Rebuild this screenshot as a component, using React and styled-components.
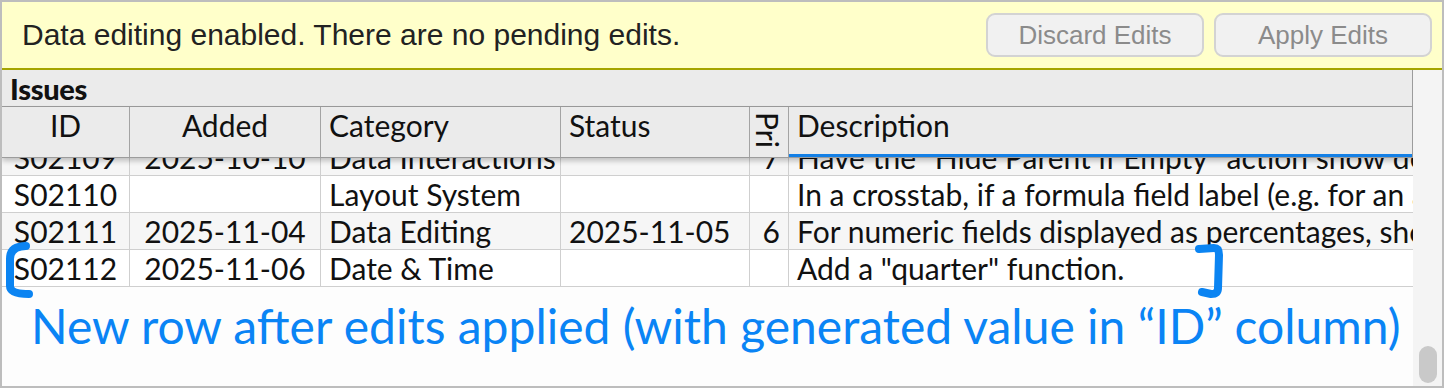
import React from 'react';
import styled, { createGlobalStyle } from 'styled-components';

const Global = createGlobalStyle`
  html, body { margin: 0; padding: 0; background: #ffffff; }
  body { width: 1444px; height: 388px; overflow: hidden; }
`;

const COLS = '128px 191px 240px 189px 39px 1fr';

const Frame = styled.div`
  position: relative;
  width: 1444px;
  height: 388px;
  box-sizing: border-box;
  border: 2px solid #bdbdbd;
  display: flex;
  flex-direction: column;
  background: #fdfdfd;
  overflow: hidden;
`;

const Banner = styled.div`
  flex: none;
  height: 66px;
  background: #ffffca;
  border-bottom: 2px solid #a4a400;
  display: flex;
  align-items: center;
  justify-content: space-between;
  padding: 0 10px 0 20px;
  font-family: "Liberation Sans", Arial, sans-serif;
`;

const BannerText = styled.span`
  font-size: 30px;
  color: #222222;
`;

const Buttons = styled.div`
  display: flex;
  gap: 10px;
  align-items: center;
`;

const EditButton = styled.button`
  width: 218px;
  height: 44px;
  box-sizing: border-box;
  border: 2px solid #d3d3d3;
  border-radius: 9px;
  background: #f1f1f1;
  color: #8b8b8b;
  font-family: "Liberation Sans", Arial, sans-serif;
  font-size: 26px;
  padding: 0;
`;

const Body = styled.div`
  flex: 1;
  display: flex;
  min-height: 0;
`;

const TableArea = styled.div`
  flex: 1;
  min-width: 0;
  display: flex;
  flex-direction: column;
  overflow: hidden;
  background: #fdfdfd;
  font-family: Lato, "Noto Sans", sans-serif;
  color: #111111;
`;

const TitleBar = styled.div`
  flex: none;
  height: 37px;
  box-sizing: border-box;
  background: #ebebeb;
  border-bottom: 1px solid #9c9c9c;
  border-right: 1px solid #9c9c9c;
  padding-left: 8px;
  display: flex;
  align-items: center;
  font-weight: 900;
  font-size: 29px;
  letter-spacing: -0.3px;
`;

const HeaderRow = styled.div`
  position: relative;
  z-index: 1;
  flex: none;
  display: grid;
  grid-template-columns: ${COLS};
  height: 51px;
  box-sizing: border-box;
  background: #ebebeb;
  border-bottom: 1px solid #9c9c9c;
  border-right: 1px solid #9c9c9c;
  box-shadow: 0 3px 5px rgba(0, 0, 0, 0.22);
`;

const HeaderCell = styled.div`
  box-sizing: border-box;
  border-right: ${(p) => (p.$last ? 'none' : '1px solid #a3a3a3')};
  padding: 0 8px;
  font-size: 30px;
  line-height: 36px;
  text-align: ${(p) => p.$align || 'left'};
  white-space: nowrap;
  overflow: hidden;
  box-shadow: ${(p) => (p.$sorted ? 'inset 0 -3px 0 #1480e6' : 'none')};
`;

const VerticalLabel = styled.div`
  box-sizing: border-box;
  border-right: 1px solid #a3a3a3;
  padding: 5px 5px 0 0;
  font-size: 30px;
  line-height: 30px;
  writing-mode: vertical-rl;
  white-space: nowrap;
`;

const RowsViewport = styled.div`
  flex: 1;
  min-height: 0;
  overflow: hidden;
`;

const RowList = styled.div`
  margin-top: -19px;
`;

const Row = styled.div`
  display: grid;
  grid-template-columns: ${COLS};
  height: 37px;
  box-sizing: border-box;
  border-bottom: 1px solid #cfcfcf;
  background: ${(p) => (p.$alt ? '#f6f6f6' : '#ffffff')};
`;

const Cell = styled.div`
  box-sizing: border-box;
  display: flex;
  align-items: center;
  justify-content: ${(p) => p.$align || 'flex-start'};
  padding: 0 8px;
  border-right: ${(p) => (p.$last ? 'none' : '1px solid #cfcfcf')};
  font-size: 30px;
  white-space: nowrap;
  overflow: hidden;
`;

const Caption = styled.div`
  padding: 10px 0 0 29px;
  font-family: Lato, "Noto Sans", sans-serif;
  font-size: 48px;
  line-height: 1.2;
  color: #0a84f5;
  white-space: nowrap;
`;

const ScrollTrack = styled.div`
  flex: none;
  width: 29px;
  box-sizing: border-box;
  background: #f4f4f4;
  display: flex;
  flex-direction: column;
  justify-content: flex-end;
  align-items: center;
  padding-bottom: 3px;
`;

const Thumb = styled.div`
  width: 18px;
  height: 37px;
  border-radius: 9px;
  background: #c9c9c9;
`;

const Annotation = styled.svg`
  position: absolute;
  left: 0;
  top: 0;
  width: 1440px;
  height: 384px;
  pointer-events: none;
  overflow: visible;
`;

const rows = [
  ['S02109', '2025-10-10', 'Data Interactions', '', '7', 'Have the "Hide Parent if Empty" action show debug info'],
  ['S02110', '', 'Layout System', '', '', 'In a crosstab, if a formula field label (e.g. for an aggregate) is edited'],
  ['S02111', '2025-11-04', 'Data Editing', '2025-11-05', '6', 'For numeric fields displayed as percentages, show the percentage when editing'],
  ['S02112', '2025-11-06', 'Date & Time', '', '', 'Add a "quarter" function.'],
];

export default function App() {
  return (
    <>
      <Global />
      <Frame>
        <Banner>
          <BannerText>Data editing enabled. There are no pending edits.</BannerText>
          <Buttons>
            <EditButton disabled>Discard Edits</EditButton>
            <EditButton disabled>Apply Edits</EditButton>
          </Buttons>
        </Banner>
        <Body>
          <TableArea>
            <TitleBar>Issues</TitleBar>
            <HeaderRow>
              <HeaderCell $align="center">ID</HeaderCell>
              <HeaderCell $align="center">Added</HeaderCell>
              <HeaderCell>Category</HeaderCell>
              <HeaderCell>Status</HeaderCell>
              <VerticalLabel>Pri</VerticalLabel>
              <HeaderCell $last $sorted>Description</HeaderCell>
            </HeaderRow>
            <RowsViewport>
              <RowList>
                {rows.map((r, i) => (
                  <Row key={r[0]} $alt={i % 2 === 0}>
                    <Cell $align="center">{r[0]}</Cell>
                    <Cell $align="center">{r[1]}</Cell>
                    <Cell>{r[2]}</Cell>
                    <Cell>{r[3]}</Cell>
                    <Cell $align="flex-end">{r[4]}</Cell>
                    <Cell $last>{r[5]}</Cell>
                  </Row>
                ))}
              </RowList>
              <Caption>New row after edits applied (with generated value in “ID” column)</Caption>
            </RowsViewport>
          </TableArea>
          <ScrollTrack>
            <Thumb />
          </ScrollTrack>
        </Body>
        <Annotation viewBox="0 0 1440 384">
          <g fill="none" stroke="#0b84f2" strokeWidth="8" strokeLinecap="round" strokeLinejoin="round">
            <path d="M 24 244 Q 8 244 8 257 L 8 284 Q 8 292 27 292" />
            <path d="M 1197 247 L 1212 246 Q 1217 246 1217 253 L 1216 286 Q 1216 292 1209 292 L 1200 290" />
          </g>
        </Annotation>
      </Frame>
    </>
  );
}
